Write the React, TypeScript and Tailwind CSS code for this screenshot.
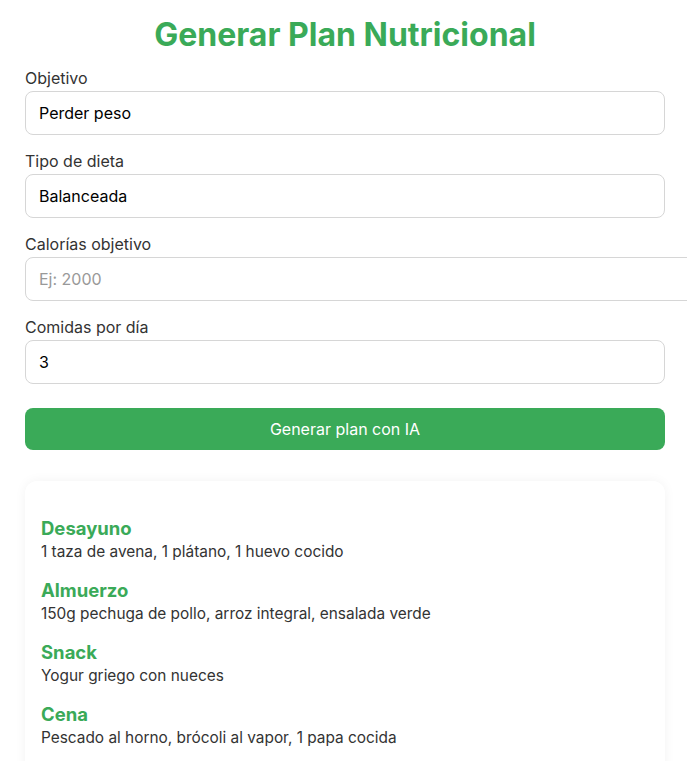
import React from "react";

type Meal = { name: string; items: string };

const meals: Meal[] = [
  { name: "Desayuno", items: "1 taza de avena, 1 plátano, 1 huevo cocido" },
  { name: "Almuerzo", items: "150g pechuga de pollo, arroz integral, ensalada verde" },
  { name: "Snack", items: "Yogur griego con nueces" },
  { name: "Cena", items: "Pescado al horno, brócoli al vapor, 1 papa cocida" },
];

function Field({
  label,
  value,
  placeholder,
  overflow,
}: {
  label: string;
  value?: string;
  placeholder?: string;
  overflow?: boolean;
}) {
  return (
    <div className="mb-[14px]">
      <label className="block text-[16px] leading-[24px] text-[#333] mb-[1px]">{label}</label>
      <input
        readOnly
        value={value ?? ""}
        placeholder={placeholder}
        className={`block h-[44px] rounded-[8px] border border-[#d6d6d6] bg-white px-[13px] text-[16px] text-black placeholder:text-[#999] outline-none ${
          overflow ? "w-[calc(100%+30px)]" : "w-full"
        }`}
      />
    </div>
  );
}

export default function App() {
  return (
    <div className="min-h-screen bg-white overflow-hidden font-['Inter',sans-serif]">
      <div className="px-[25px] pt-[17px] w-[690px]">
        <div className="w-[640px]">
          <h1 className="text-center text-[32px] leading-[36px] font-bold text-[#3aaa58] mb-[13px]">
            Generar Plan Nutricional
          </h1>
          <Field label="Objetivo" value="Perder peso" />
          <Field label="Tipo de dieta" value="Balanceada" />
          <Field label="Calorías objetivo" placeholder="Ej: 2000" overflow />
          <Field label="Comidas por día" value="3" />
          <button className="mt-[10px] w-full h-[42px] rounded-[8px] bg-[#3aaa58] text-white text-[16px]">
            Generar plan con IA
          </button>
          <div className="mt-[31px] rounded-[12px] bg-white shadow-[0_0_12px_rgba(0,0,0,0.05)] px-[16px] pt-[35px] pb-[20px]">
            {meals.map((m) => (
              <div key={m.name} className="mb-[14px]">
                <h3 className="text-[18.5px] leading-[24px] font-bold text-[#3aaa58]">{m.name}</h3>
                <p className="text-[15.4px] leading-[24px] text-[#333]">{m.items}</p>
              </div>
            ))}
          </div>
        </div>
      </div>
    </div>
  );
}
